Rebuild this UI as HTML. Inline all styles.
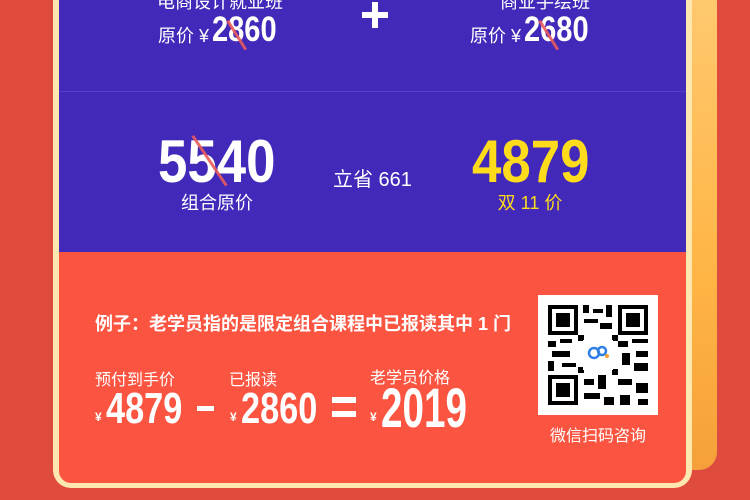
<!DOCTYPE html>
<html><head><meta charset="utf-8"><style>
*{margin:0;padding:0;box-sizing:border-box}
body{width:750px;height:500px;overflow:hidden;background:#e04b40;position:relative;font-family:"Liberation Sans","Noto Sans CJK SC",sans-serif;color:#fff}
.abs{position:absolute}
.side{left:680px;top:0;width:37px;height:470px;background:linear-gradient(#ffc86e,#ffb444 60%,#f5a03a);border-radius:0 0 18px 0}
.card{left:53px;top:-20px;width:639px;height:508px;background:#ffe7b0;border-radius:0 0 18px 18px}
.purple{left:59px;top:0;width:627px;height:252px;background:#4229b9}
.orange{left:59px;top:252px;width:627px;height:231px;background:#fb5541;border-radius:0 0 12px 12px}
.div{left:59px;top:91px;width:627px;height:1px;background:#5540c8}
.c{text-align:center;white-space:nowrap}
.strike{position:absolute;height:3px;background:#e95a5a;opacity:.9;transform-origin:0 0}
.n{position:absolute;font-weight:bold;line-height:1;transform-origin:0 0;white-space:nowrap}
.y{position:absolute;font-size:12px;font-weight:bold}
</style></head><body>
<div class="abs side"></div>
<div class="abs card"></div>
<div class="abs purple"></div>
<div class="abs div"></div>
<div class="abs orange"></div>

<div class="abs c" style="left:120px;top:-12px;width:200px;font-size:18px">电商设计就业班</div>
<div class="abs c" style="left:445px;top:-12px;width:200px;font-size:18px">商业手绘班</div>
<div class="abs" style="left:158px;top:22px;font-size:18px">原价 ¥</div>
<div class="n" style="left:212px;top:12px;font-size:35px;transform:scaleX(.83)">2860</div>
<div class="strike" style="left:229px;top:20px;width:34px;transform:rotate(58deg)"></div>
<div class="abs" style="left:470px;top:22px;font-size:18px">原价 ¥</div>
<div class="n" style="left:524px;top:12px;font-size:35px;transform:scaleX(.83)">2680</div>
<div class="strike" style="left:541px;top:20px;width:34px;transform:rotate(58deg)"></div>
<div class="abs" style="left:362px;top:2px;width:26px;height:26px">
 <div class="abs" style="left:0;top:10px;width:26px;height:6px;background:#fff"></div>
 <div class="abs" style="left:10px;top:0;width:6px;height:26px;background:#fff"></div></div>

<div class="n" style="left:158px;top:132px;font-size:60px;transform:scaleX(.88)">5540</div>
<div class="strike" style="left:194px;top:135px;width:60px;transform:rotate(56deg)"></div>
<div class="abs c" style="left:157px;top:189px;width:120px;font-size:18px">组合原价</div>
<div class="abs" style="left:333px;top:163px;font-size:20px">立省 661</div>
<div class="n" style="left:472px;top:132px;font-size:60px;color:#fedc1c;transform:scaleX(.88)">4879</div>
<div class="abs c" style="left:470px;top:189px;width:120px;font-size:18px;color:#fedc1c">双 11 价</div>

<div class="abs" style="left:95px;top:310px;font-size:18px;font-weight:bold;white-space:nowrap">例子：老学员指的是限定组合课程中已报读其中 1 门</div>
<div class="abs" style="left:95px;top:366px;font-size:16px">预付到手价</div>
<div class="abs" style="left:229px;top:366px;font-size:16px">已报读</div>
<div class="abs" style="left:370px;top:364px;font-size:16px">老学员价格</div>
<div class="y" style="left:95px;top:410px">¥</div>
<div class="n" style="left:106px;top:387px;font-size:44px;transform:scaleX(.78)">4879</div>
<div class="abs" style="left:197px;top:406px;width:17px;height:5px;background:#fff"></div>
<div class="y" style="left:230px;top:410px">¥</div>
<div class="n" style="left:241px;top:387px;font-size:44px;transform:scaleX(.78)">2860</div>
<div class="abs" style="left:332px;top:397px;width:24px;height:6px;background:#fff"></div>
<div class="abs" style="left:332px;top:411px;width:24px;height:6px;background:#fff"></div>
<div class="y" style="left:370px;top:410px">¥</div>
<div class="n" style="left:381px;top:380px;font-size:56px;transform:scaleX(.69)">2019</div>

<div class="abs" style="left:538px;top:295px;width:120px;height:120px;background:#fff">
<svg width="120" height="120" viewBox="0 0 120 120">
<g fill="#000">
<rect x="10" y="10" width="30" height="30"/><rect x="14" y="14" width="22" height="22" fill="#fff"/><rect x="18" y="18" width="14" height="14"/>
<rect x="80" y="10" width="30" height="30"/><rect x="84" y="14" width="22" height="22" fill="#fff"/><rect x="88" y="18" width="14" height="14"/>
<rect x="10" y="80" width="30" height="30"/><rect x="14" y="84" width="22" height="22" fill="#fff"/><rect x="18" y="88" width="14" height="14"/>
<rect x="45" y="10" width="6" height="8"/><rect x="55" y="14" width="10" height="4"/><rect x="68" y="10" width="6" height="12"/><rect x="46" y="24" width="14" height="4"/><rect x="62" y="28" width="12" height="6"/>
<rect x="10" y="46" width="8" height="6"/><rect x="22" y="44" width="12" height="4"/><rect x="14" y="56" width="18" height="6"/><rect x="10" y="66" width="6" height="10"/><rect x="24" y="68" width="14" height="4"/>
<rect x="80" y="46" width="10" height="6"/><rect x="94" y="44" width="16" height="4"/><rect x="84" y="58" width="8" height="12"/><rect x="98" y="56" width="12" height="6"/><rect x="96" y="68" width="14" height="8"/>
<rect x="46" y="84" width="10" height="6"/><rect x="60" y="80" width="8" height="14"/><rect x="46" y="98" width="16" height="6"/><rect x="66" y="102" width="10" height="8"/><rect x="80" y="84" width="14" height="6"/><rect x="98" y="88" width="12" height="10"/><rect x="82" y="100" width="10" height="10"/><rect x="100" y="104" width="10" height="6"/>
<rect x="40" y="40" width="6" height="6"/><rect x="74" y="40" width="6" height="6"/><rect x="40" y="72" width="6" height="6"/><rect x="74" y="74" width="6" height="6"/>
</g>
<rect x="45" y="45" width="30" height="30" fill="#fff"/>
<circle cx="56" cy="58" r="5" fill="none" stroke="#2f7fe6" stroke-width="2.5"/><circle cx="64" cy="56" r="4" fill="none" stroke="#2f7fe6" stroke-width="2.5"/><circle cx="69" cy="61" r="2" fill="#f5a030"/>
</svg></div>
<div class="abs c" style="left:538px;top:422px;width:120px;font-size:16px">微信扫码咨询</div>
</body></html>
